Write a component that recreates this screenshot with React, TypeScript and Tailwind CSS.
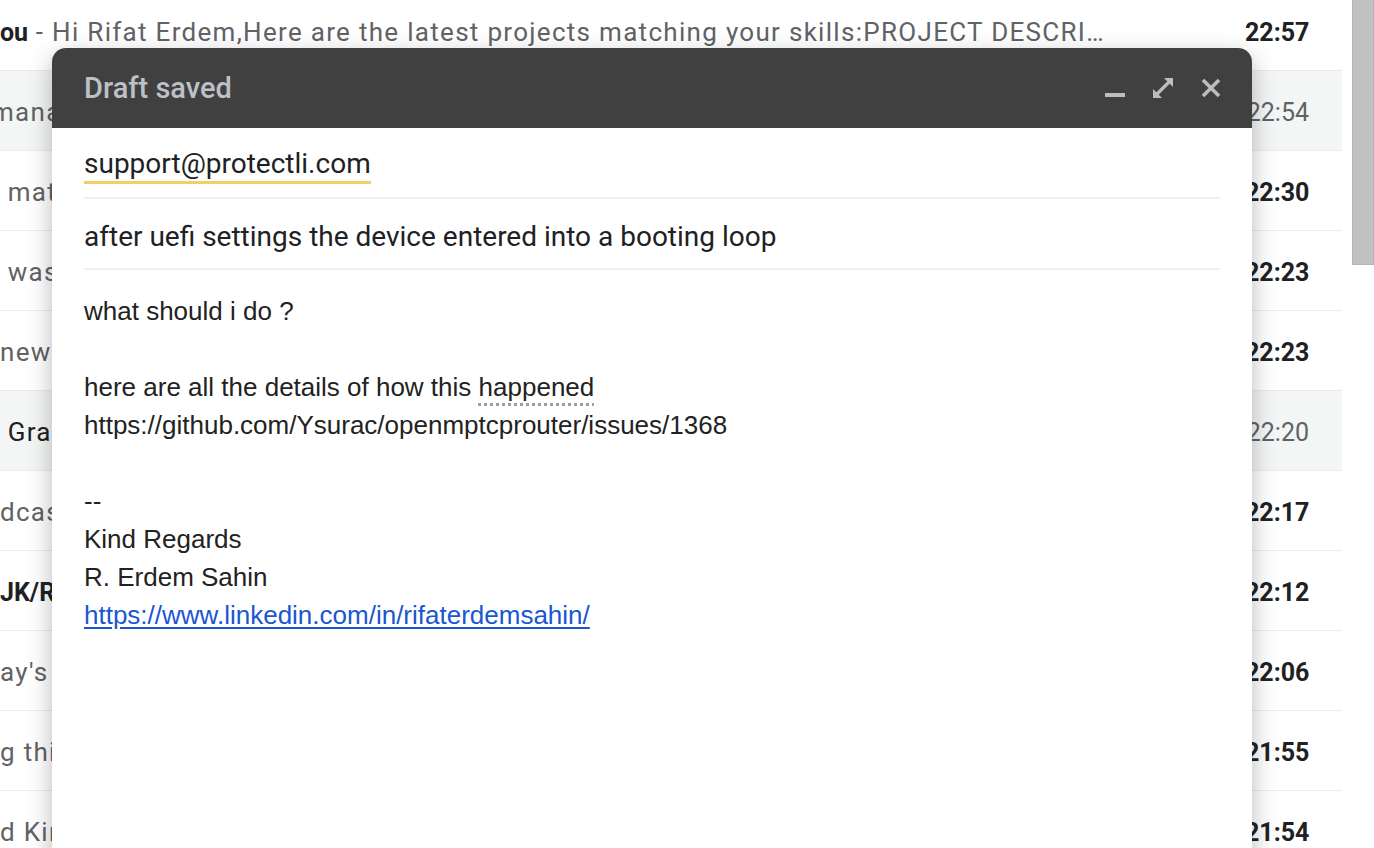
const rows = [
  { lead: "ou", leadBold: true, snippet: " - Hi Rifat Erdem,Here are the latest projects matching your skills:PROJECT DESCRI…", time: "22:57", read: false },
  { lead: "", snippet: "management update for your account", time: "22:54", read: true, shift: true },
  { lead: "", snippet: " matches for your recent search", time: "22:30", read: false },
  { lead: "", snippet: " was shipped today", time: "22:23", read: false },
  { lead: "", snippet: "new sign-in to your account", time: "22:23", read: false },
  { lead: "", snippet: " Grace period ending soon", time: "22:20", read: true, dark: true },
  { lead: "", snippet: "dcast episode is now available", time: "22:17", read: false },
  { lead: "JK/Rates and offers", leadBold: true, snippet: "", time: "22:12", read: false },
  { lead: "", snippet: "ay's top stories for you", time: "22:06", read: false },
  { lead: "", snippet: "g this week in review", time: "21:55", read: false },
  { lead: "", snippet: "d Kind reminders for tomorrow", time: "21:54", read: false },
];

function MailRow({ row }: { row: (typeof rows)[number] }) {
  return (
    <div
      className={`flex h-[80px] shrink-0 items-center border-b border-[#e9ebee] pr-[33px] pt-[4px] text-[25px] ${
        row.read ? "bg-[#f4f6f6]" : "bg-white"
      }`}
    >
      <div className={`min-w-0 flex-1 overflow-hidden whitespace-pre ${row.shift ? "-ml-[9px]" : ""}`}>
        {row.lead && <span className={row.leadBold ? "font-bold text-[#202124]" : ""}>{row.lead}</span>}
        <span className={`text-[26px] tracking-[1.3px] ${row.dark ? "text-[#202124]" : "text-[#5f6368]"}`}>
          {row.snippet}
        </span>
      </div>
      <div
        className={`ml-8 w-[64px] text-right ${
          row.read ? "font-normal text-[#5f6368]" : "font-bold text-[#202124]"
        }`}
      >
        {row.time}
      </div>
    </div>
  );
}

function ComposeWindow() {
  return (
    <div className="absolute left-[52px] top-[48px] flex h-[820px] w-[1200px] flex-col overflow-hidden rounded-t-[14px] bg-white shadow-[0_8px_24px_rgba(0,0,0,0.28)]">
      <div className="flex h-[80px] shrink-0 items-center bg-[#404040] pl-8 pr-[30px]">
        <div className="flex-1 pt-[2px] text-[29px] font-medium text-[#bdc1c6]">Draft saved</div>
        <div className="flex items-center gap-[26px]">
          <svg width="22" height="22" viewBox="0 0 22 22">
            <rect x="1" y="16" width="20" height="4" fill="#bdbdbd" />
          </svg>
          <svg width="22" height="22" viewBox="0 0 22 22">
            <path d="M4 18 L18 4" stroke="#bdbdbd" strokeWidth="3.2" />
            <path d="M1 21 L1 12 L10 21 Z" fill="#bdbdbd" />
            <path d="M21 1 L21 10 L12 1 Z" fill="#bdbdbd" />
          </svg>
          <svg width="22" height="22" viewBox="0 0 22 22">
            <path d="M3 3 L19 19 M19 3 L3 19" stroke="#bdbdbd" strokeWidth="3.6" />
          </svg>
        </div>
      </div>
      <div className="flex flex-1 flex-col px-8">
        <div className="flex h-[71px] shrink-0 items-center border-b-2 border-[#efefef] pt-[5px] text-[28px] text-[#202124]">
          <span className="border-b-[3px] border-[#f4cd67] leading-[35px]">support@protectli.com</span>
        </div>
        <div className="flex h-[71px] shrink-0 items-center border-b-2 border-[#efefef] pt-[6px] text-[28px] text-[#202124]">
          after uefi settings the device entered into a booting loop
        </div>
        <div className="pt-[22px] font-['Liberation_Sans',Arial,sans-serif] text-[26px] leading-[38px] text-[#222222]">
          <div>what should i do ?</div>
          <div>&nbsp;</div>
          <div>
            here are all the details of how this{" "}
            <span className="underline decoration-[#9e9e9e] decoration-dotted decoration-[3px] underline-offset-[7px]">
              happened
            </span>
          </div>
          <div>https://github.com/Ysurac/openmptcprouter/issues/1368</div>
          <div>&nbsp;</div>
          <div>--</div>
          <div>Kind Regards</div>
          <div>R. Erdem Sahin</div>
          <div>
            <a href="#" className="text-[#1a56d4] underline underline-offset-[3px]">
              https://www.linkedin.com/in/rifaterdemsahin/
            </a>
          </div>
        </div>
      </div>
    </div>
  );
}

export default function App() {
  return (
    <div className="relative flex h-[848px] w-[1374px] overflow-hidden bg-white font-['Roboto',Arial,sans-serif]">
      <div className="-mt-[9px] flex w-[1342px] flex-col">
        {rows.map((row, i) => (
          <MailRow key={i} row={row} />
        ))}
      </div>
      <div className="ml-[10px] flex w-[22px] flex-col">
        <div className="h-[265px] w-full border-x border-b border-[#b5b5b5] bg-[#c1c1c1]" />
      </div>
      <ComposeWindow />
    </div>
  );
}
